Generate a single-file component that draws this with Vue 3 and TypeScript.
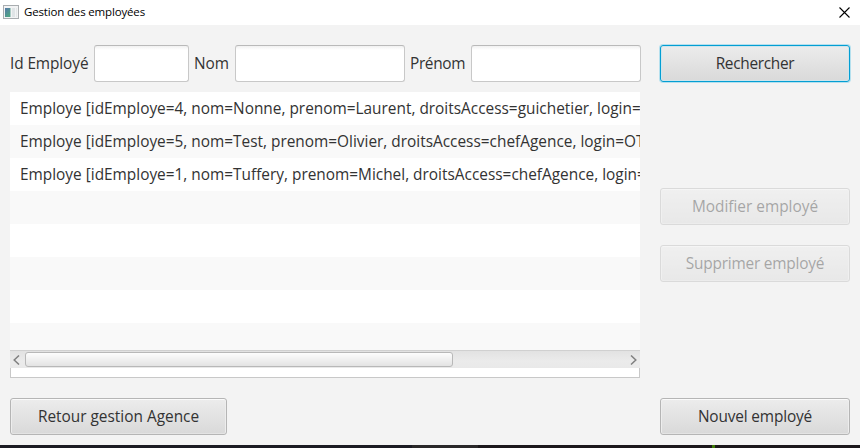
<script setup lang="ts">
import { ref } from 'vue'

interface Employe {
  id: number
  nom: string
  prenom: string
  droits: string
  login: string
}

const employes: Employe[] = [
  { id: 4, nom: 'Nonne', prenom: 'Laurent', droits: 'guichetier', login: '' },
  { id: 5, nom: 'Test', prenom: 'Olivier', droits: 'chefAgence', login: 'OT' },
  { id: 1, nom: 'Tuffery', prenom: 'Michel', droits: 'chefAgence', login: '' },
]
const emptyRows = 5

const id = ref('')
const nom = ref('')
const prenom = ref('')

const describe = (e: Employe): string =>
  `Employe [idEmploye=${e.id}, nom=${e.nom}, prenom=${e.prenom}, droitsAccess=${e.droits}, login=${e.login}`
</script>

<template>
  <div class="window">
    <header class="titlebar">
      <svg class="app-icon" width="16" height="14" viewBox="0 0 16 14">
        <defs>
          <linearGradient id="pane" x1="0" y1="0" x2="0.6" y2="1">
            <stop offset="0" stop-color="#5678a8" />
            <stop offset="1" stop-color="#4fa386" />
          </linearGradient>
        </defs>
        <rect x="0.5" y="0.5" width="15" height="13" fill="#f2f3f4" stroke="#a9adb0" />
        <rect x="2" y="3" width="5" height="9" fill="url(#pane)" />
        <rect x="7" y="3" width="1" height="9" fill="#a9cbc4" />
        <rect x="9" y="3" width="3" height="9" fill="#dfe4e6" />
        <rect x="13" y="3" width="1" height="9" fill="#e4e7e8" />
      </svg>
      <h1 class="title">Gestion des employées</h1>
      <svg class="close" width="11" height="11" viewBox="0 0 11 11">
        <path d="M0.5 0.5L10.5 10.5M10.5 0.5L0.5 10.5" stroke="#000" stroke-width="1.1" fill="none" />
      </svg>
    </header>

    <main class="content">
      <section class="left">
        <form class="search" @submit.prevent>
          <label class="label label-id" for="id">Id Employé</label>
          <input id="id" v-model="id" class="field field-id" />
          <label class="label label-nom" for="nom">Nom</label>
          <input id="nom" v-model="nom" class="field" />
          <label class="label label-prenom" for="prenom">Prénom</label>
          <input id="prenom" v-model="prenom" class="field" />
        </form>

        <div class="list">
          <ul class="rows">
            <li v-for="e in employes" :key="e.id" class="row"><span>{{ describe(e) }}</span></li>
            <li v-for="n in emptyRows" :key="'vide' + n" class="row"></li>
          </ul>
          <div class="scrollbar">
            <svg class="arrow" width="7" height="10" viewBox="0 0 7 10">
              <path d="M6 0.5L1.2 5L6 9.5" />
            </svg>
            <div class="track"><div class="thumb"></div></div>
            <svg class="arrow" width="7" height="10" viewBox="0 0 7 10">
              <path d="M1 0.5L5.8 5L1 9.5" />
            </svg>
          </div>
          <div class="list-foot"></div>
        </div>

        <button class="btn btn-back"><span>Retour gestion Agence</span></button>
      </section>

      <aside class="right">
        <button class="btn focused"><span>Rechercher</span></button>
        <div class="edit">
          <button class="btn" disabled><span>Modifier employé</span></button>
          <button class="btn btn-delete" disabled><span>Supprimer employé</span></button>
        </div>
        <button class="btn btn-new"><span>Nouvel employé</span></button>
      </aside>
    </main>
    <footer class="desktop"><i class="seg-a"></i><i class="seg-b"></i><i class="seg-c"></i><i class="seg-d"></i></footer>
  </div>
</template>

<style>
body {
  margin: 0;
  overflow: hidden;
}
</style>

<style scoped>
* {
  box-sizing: border-box;
}
.window {
  width: 860px;
  height: 448px;
  display: flex;
  flex-direction: column;
  background: #f3f3f3;
  color: #333;
  font-family: "Segoe UI", "Open Sans", sans-serif;
  font-size: 15.4px;
  overflow: hidden;
}
.titlebar {
  height: 25px;
  flex: none;
  display: flex;
  align-items: center;
  padding: 0 10px 1px 3px;
  background: #fff;
}
.app-icon {
  flex: none;
  margin-right: 5px;
}
.title {
  margin: 0;
  font-size: 11.5px;
  line-height: 16px;
  font-weight: 400;
  color: #000;
  white-space: nowrap;
  letter-spacing: -0.16px;
}
.close {
  margin-left: auto;
}
.content {
  height: 420px;
  flex: none;
  display: flex;
  justify-content: space-between;
  padding: 20px 10px 10px;
}
.left {
  width: 630px;
  display: flex;
  flex-direction: column;
}
.search {
  display: flex;
  width: 631px;
  height: 37px;
}
.label {
  flex: none;
  line-height: 37px;
  white-space: nowrap;
}
.label-id {
  width: 84px;
  letter-spacing: -0.1px;
}
.label-nom {
  width: 46px;
  padding-left: 5px;
  letter-spacing: -0.1px;
}
.label-prenom {
  width: 66px;
  padding-left: 5px;
  letter-spacing: -0.35px;
}
.field {
  width: 170px;
  height: 37px;
  margin: 0;
  padding: 0 8px;
  border: 1px solid #c8c8c8;
  border-top-color: #b9b9b9;
  border-radius: 3px;
  background: linear-gradient(#f1f1f1, #fff 4px);
  font: inherit;
  outline: none;
}
.field-id {
  width: 95px;
}
.list {
  margin-top: 10px;
  height: 286px;
  display: flex;
  flex-direction: column;
}
.rows {
  height: 258px;
  flex: none;
  margin: 0;
  padding: 0;
  list-style: none;
  overflow: hidden;
}
.row {
  height: 33px;
  padding-left: 10px;
  line-height: 33px;
  background: #fff;
  white-space: nowrap;
  overflow: hidden;
}
.row:nth-child(even) {
  background: #f9f9f9;
}
.scrollbar {
  height: 18px;
  flex: none;
  display: flex;
  align-items: center;
  padding: 0 3px;
  border-top: 1px solid #d0d0d0;
  background: linear-gradient(#e2e2e2, #ebebeb 60%, #e9e9e9);
}
.arrow {
  flex: none;
}
.arrow path {
  fill: none;
  stroke: #808080;
  stroke-width: 1.5;
}
.track {
  flex: 1;
  padding-left: 5px;
}
.thumb {
  width: 428px;
  height: 15px;
  border: 1px solid #b8b8b8;
  border-radius: 3px;
  background: linear-gradient(#fdfdfd, #e3e3e3);
}
.list-foot {
  height: 10px;
  background: #fff;
  border: 1px solid #c8c8c8;
  border-top: 0;
}
.btn {
  width: 190px;
  height: 37px;
  flex: none;
  margin: 0;
  padding: 0;
  border: 1px solid #b5b5b5;
  border-radius: 3px;
  background: linear-gradient(#ececec, #d9d9d9);
  box-shadow: inset 0 1px 0 #fafafa, inset 1px 0 0 #ededed, inset -1px 0 0 #ededed, inset 0 -1px 0 #e3e3e3;
  color: #333;
  font: inherit;
  line-height: 35px;
  white-space: nowrap;
}
.btn:disabled {
  opacity: 0.4;
}
.btn.focused {
  border-color: #039ed3;
  box-shadow: 0 0 0 1px #b5e0ee, inset 0 0 0 1px #cfe5ec;
  letter-spacing: -0.3px;
}
.btn-back {
  width: 217px;
  margin-top: 20px;
}
.btn-delete {
  letter-spacing: -0.2px;
}
.right {
  width: 190px;
  display: flex;
  flex-direction: column;
}
.edit {
  display: flex;
  flex-direction: column;
  gap: 20px;
  margin-top: 106px;
}
.btn-new {
  margin-top: auto;
  letter-spacing: -0.15px;
}
.desktop {
  height: 3px;
  flex: none;
  display: flex;
  background: #1b181b;
}
.desktop i {
  height: 3px;
}
.seg-a {
  width: 412px;
  background: #1b1b23;
}
.seg-b {
  width: 66px;
  background: #2a2829;
}
.seg-c {
  width: 234px;
}
.seg-d {
  width: 3px;
  background: #3f7a08;
}
</style>
